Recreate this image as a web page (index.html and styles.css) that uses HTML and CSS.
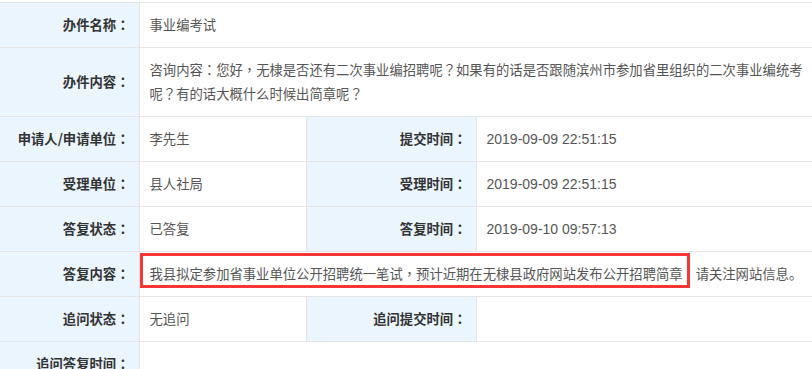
FILE: index.html
```html
<!DOCTYPE html>
<html>
<head>
    <meta charset="UTF-8">
    <title>办件详情</title>
    <link rel="stylesheet" href="styles.css">
</head>
<body>
    <table class="detail">
        <colgroup>
            <col class="col-label">
            <col class="col-value">
            <col class="col-label2">
            <col>
        </colgroup>
        <tr>
            <th>办件名称<i>：</i></th>
            <td colspan="3">事业编考试</td>
        </tr>
        <tr>
            <th>办件内容<i>：</i></th>
            <td colspan="3">咨询内容<i>：</i>您好<i>，</i>无棣是否还有二次事业编招聘呢<i>？</i>如果有的话是否跟随滨州市参加省里组织的二次事业编统考呢<i>？</i>有的话大概什么时候出简章呢<i>？</i></td>
        </tr>
        <tr>
            <th>申请人/申请单位<i>：</i></th>
            <td>李先生</td>
            <th>提交时间<i>：</i></th>
            <td><span class="time">2019-09-09 22:51:15</span></td>
        </tr>
        <tr>
            <th>受理单位<i>：</i></th>
            <td>县人社局</td>
            <th>受理时间<i>：</i></th>
            <td><span class="time">2019-09-09 22:51:15</span></td>
        </tr>
        <tr>
            <th>答复状态<i>：</i></th>
            <td>已答复</td>
            <th>答复时间<i>：</i></th>
            <td><span class="time">2019-09-10 09:57:13</span></td>
        </tr>
        <tr>
            <th>答复内容<i>：</i></th>
            <td colspan="3" class="nowrap"><span class="mark">我县拟定参加省事业单位公开招聘统一笔试<i>，</i>预计近期在无棣县政府网站发布公开招聘简章</span>请关注网站信息。</td>
        </tr>
        <tr>
            <th>追问状态<i>：</i></th>
            <td>无追问</td>
            <th>追问提交时间<i>：</i></th>
            <td></td>
        </tr>
        <tr>
            <th>追问答复时间<i>：</i></th>
            <td colspan="3"></td>
        </tr>
    </table>
</body>
</html>
```

FILE: styles.css
```css
body {
    margin: 0;
    padding-top: 2px;
    overflow: hidden;
    background-color: #fff;
    font-family: "Noto Sans CJK SC", "Liberation Sans", sans-serif;
    font-size: 13.33px;
    color: #555;
}
/* full-width punctuation, centred in its cell */
i {
    font-style: normal;
    font-family: "Noto Sans CJK TC", "Noto Sans CJK SC", sans-serif;
    font-feature-settings: "locl" 0;
}
.detail {
    width: 822px;
    border-collapse: collapse;
    table-layout: fixed;
}
.col-label {
    width: 139px;
}
.col-value {
    width: 167px;
}
.col-label2 {
    width: 170px;
}
.detail th,
.detail td {
    border: 1px solid #e4e4e4;
    padding: 10px 9px 10px 10px;
    line-height: 24px;
    vertical-align: middle;
}
.detail th {
    background-color: #eaf5fe;
    color: #333;
    font-weight: bold;
    text-align: right;
    padding-right: 9px;
}
.detail tr > :first-child {
    border-left: none;
}
.detail td {
    text-align: left;
}
.time {
    font-family: "Liberation Sans", sans-serif;
    font-size: 14px;
}
.nowrap {
    white-space: nowrap;
}
/* red frame around the key sentence of the answer */
.mark {
    position: relative;
    display: inline-block;
    margin-right: 13px;
}
.mark::after {
    content: "";
    position: absolute;
    left: -10px;
    right: -7px;
    top: -9px;
    bottom: -2px;
    border: 3px solid #f43636;
}
```
